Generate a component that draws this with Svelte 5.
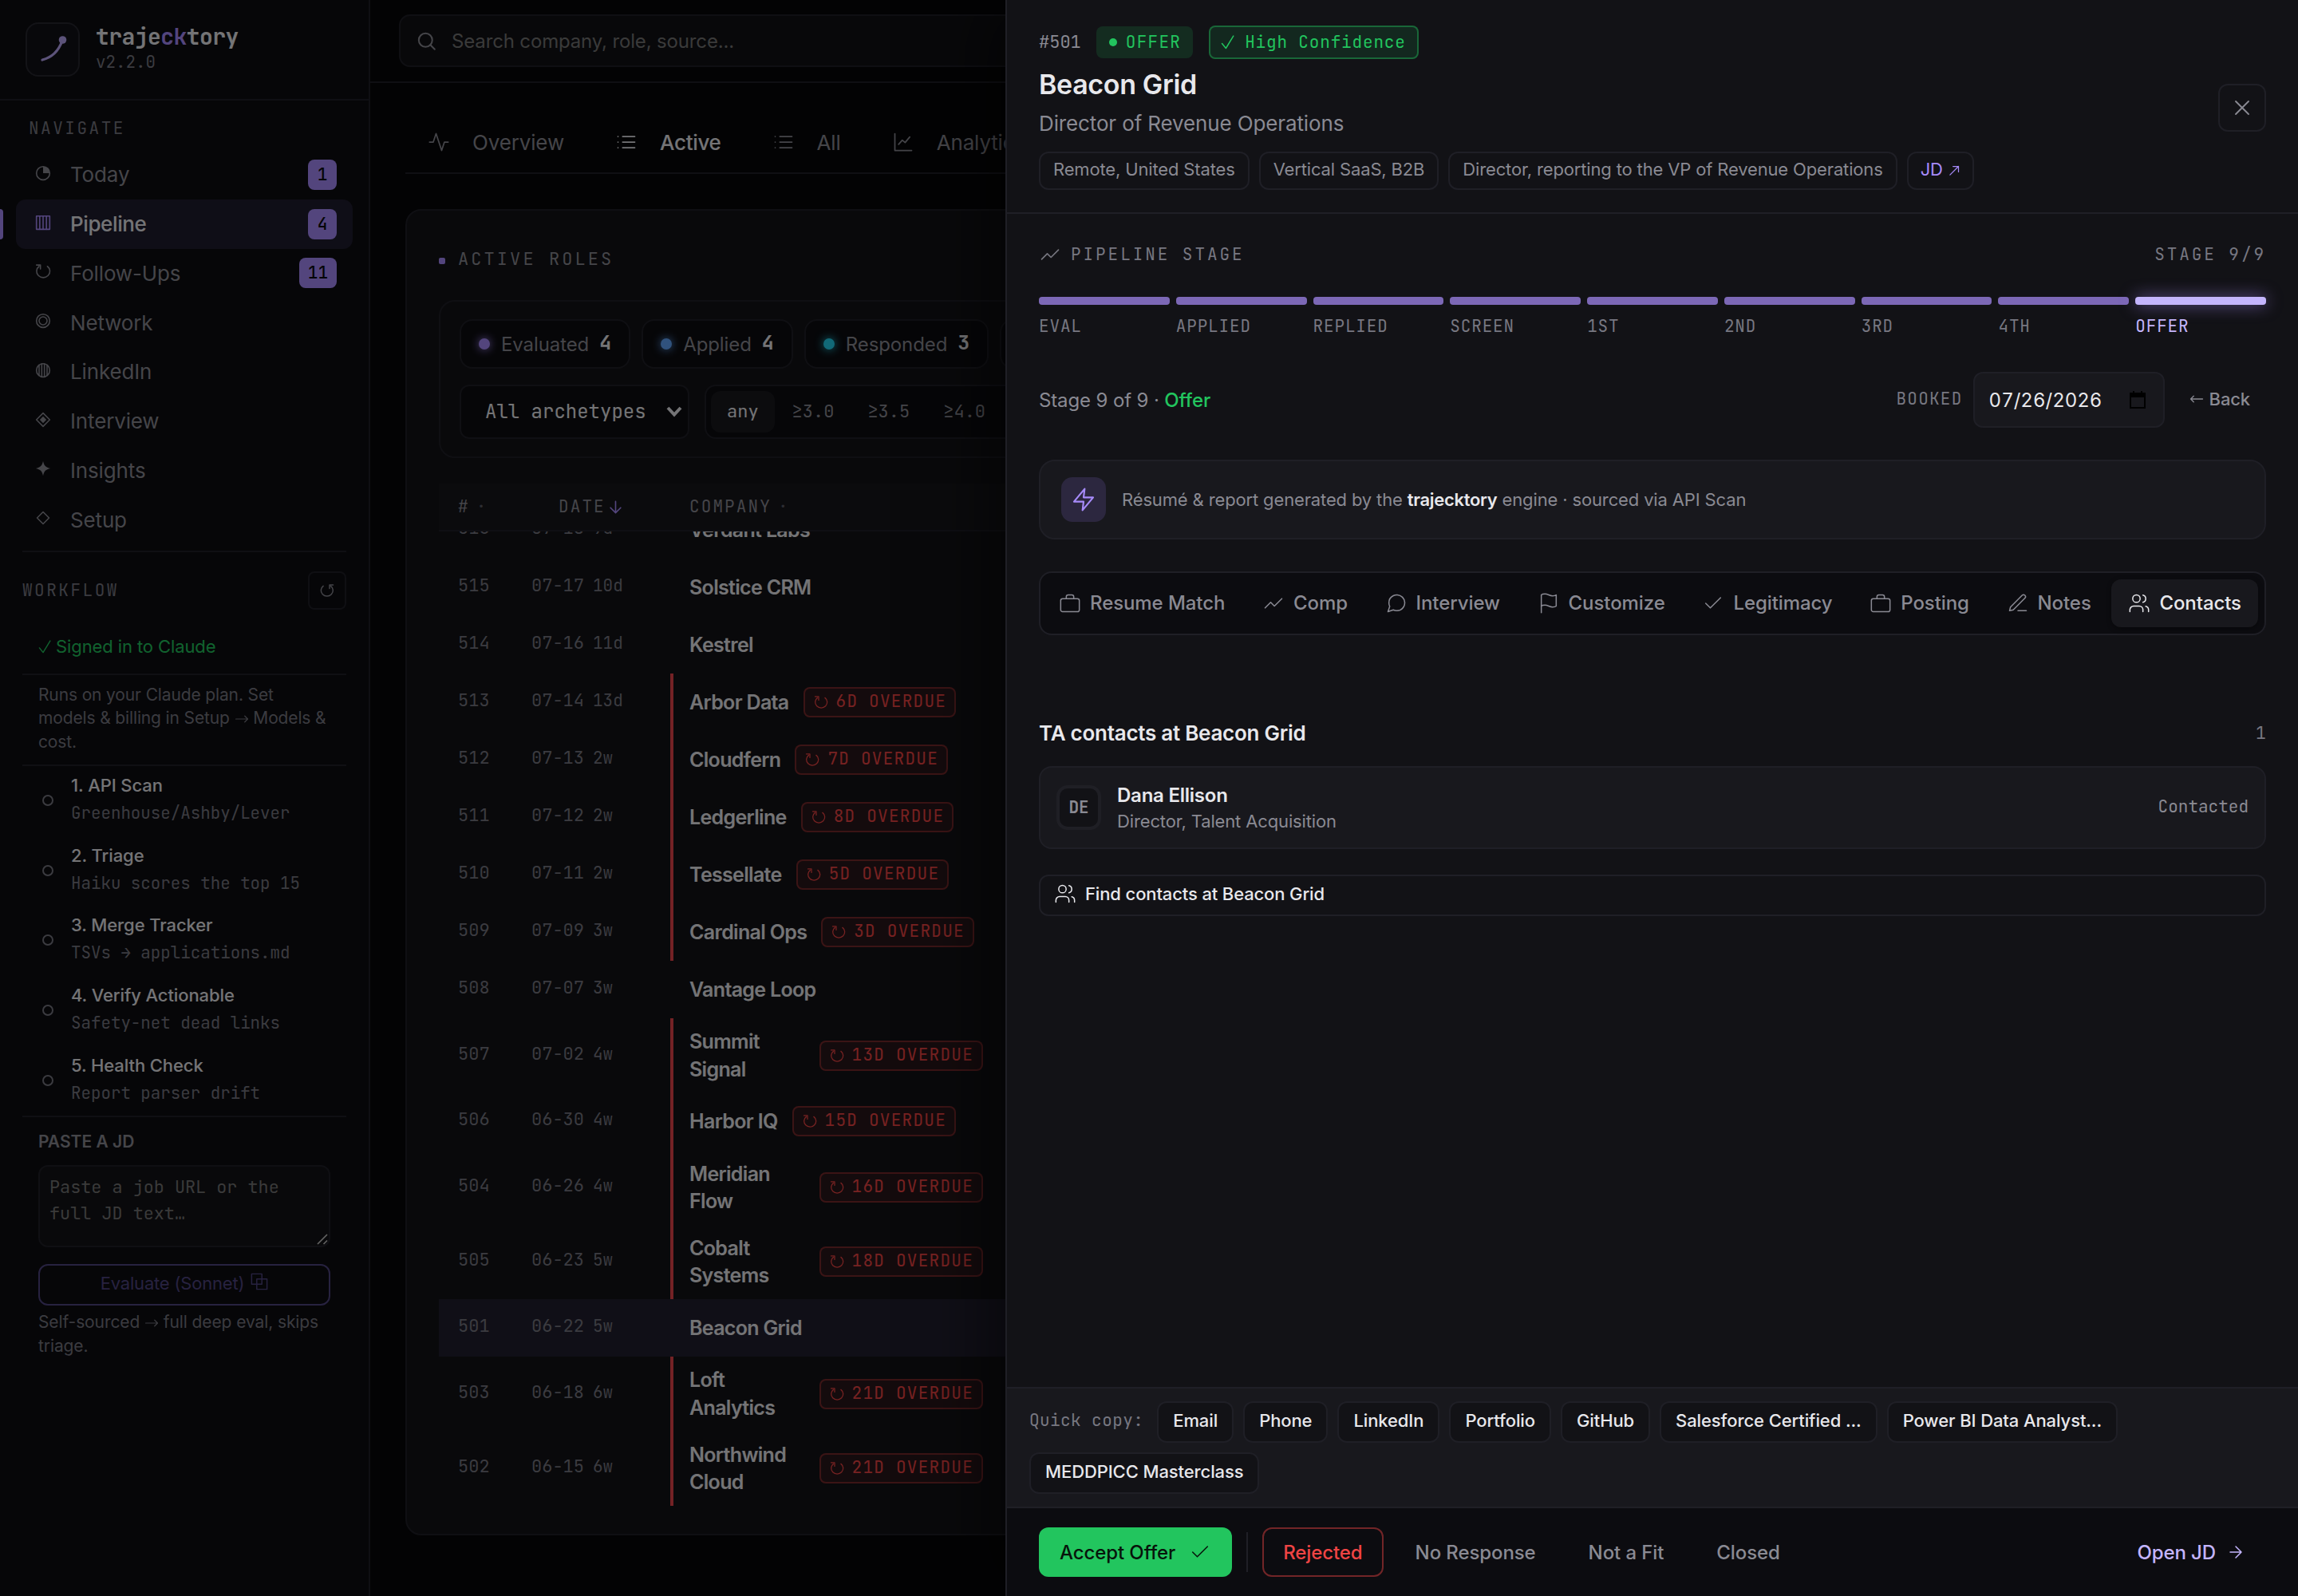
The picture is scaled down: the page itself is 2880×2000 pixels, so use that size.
<script>
  let search = '';
  let draft = '';
  let activeTab = 'Contacts';
  let minScore = 'any';

  // stroke icons, 24px grid
  const icons = {
    search: ['M11 4a7 7 0 1 0 0 14 7 7 0 0 0 0-14z', 'M20.5 20.5L16 16'],
    activity: ['M22 12h-4l-3 9L9 3l-3 9H2'],
    list: ['M8 6h13M8 12h13M8 18h13', 'M3 6h.01M3 12h.01M3 18h.01'],
    chart: ['M3 3v18h18', 'M7 14.5l4-4.5 3 2.5 5-6'],
    trend: ['M3 17l6-6 4 4 8-8'],
    briefcase: ['M4 7h16a2 2 0 0 1 2 2v10a2 2 0 0 1-2 2H4a2 2 0 0 1-2-2V9a2 2 0 0 1 2-2z', 'M8 7V5a2 2 0 0 1 2-2h4a2 2 0 0 1 2 2v2'],
    chat: ['M21 11.5a8.38 8.38 0 0 1-.9 3.8 8.5 8.5 0 0 1-7.6 4.7 8.38 8.38 0 0 1-3.8-.9L3 21l1.9-5.7a8.38 8.38 0 0 1-.9-3.8 8.5 8.5 0 0 1 4.7-7.6 8.38 8.38 0 0 1 3.8-.9h.5a8.48 8.48 0 0 1 8 8v.5z'],
    flag: ['M4 15s1-1 4-1 5 2 8 2 4-1 4-1V3s-1 1-4 1-5-2-8-2-4 1-4 1z', 'M4 22v-7'],
    check: ['M20 6L9 17l-5-5'],
    edit: ['M12 20h9', 'M16.5 3.5a2.12 2.12 0 0 1 3 3L7 19l-4 1 1-4z'],
    users: ['M16 21v-2a4 4 0 0 0-4-4H6a4 4 0 0 0-4 4v2', 'M9 3a4 4 0 1 0 0 8 4 4 0 0 0 0-8z', 'M22 21v-2a4 4 0 0 0-3-3.87', 'M16 3.13a4 4 0 0 1 0 7.75'],
    bolt: ['M13 2L3 14h9l-1 8 10-12h-9z'],
    close: ['M18 6L6 18M6 6l12 12'],
    arrow: ['M5 12h14M12 5l7 7-7 7'],
    down: ['M12 2v20M3 13l9 9 9-9'],
    today: ['M12 2a10 10 0 1 0 0 20 10 10 0 0 0 0-20z'],
    pipeline: ['M2 2h20v20H2z', 'M7 2v20M12 2v20M17 2v20'],
    refresh: ['M18.5 4.5a10 9.5 0 1 1-12.5 0', 'M2 2.5h6v6'],
    undo: ['M5.5 4.5a10 9.5 0 1 0 12.5 0', 'M22 2.5h-6v6'],
    network: ['M12 2a10 10 0 1 0 0 20 10 10 0 0 0 0-20z', 'M12 6a6 6 0 1 0 0 12 6 6 0 0 0 0-12z'],
    linkedin: ['M12 2a10 10 0 1 0 0 20 10 10 0 0 0 0-20z', 'M6 4v16M10 2v20M14 2v20M18 4v16'],
    interview: ['M12 2l10 10-10 10L2 12z'],
    insights: [],
    setup: ['M12 3l9 9-9 9-9-9z'],
    overlap: ['M1.5 1.5h14v14h-14z', 'M8.5 8.5h14v14h-14z'],
    tick: ['M2 14l6.500 8L21 1.500'],
    right: ['M2 12h20M17 7l5 5-5 5'],
    left: ['M22 12H2M7 7l-5 5 5 5'],
    upRight: ['M3 21L20 4M9 4h11v11']
  };

  const filled = {
    today: 'M12 2v10h10A10 10 0 0 0 12 2z',
    interview: 'M12 7l5 5-5 5-5-5z',
    insights: 'M12 1c1.5 7 4 9.5 11 11-7 1.500-9.500 4-11 11-1.500-7-4-9.500-11-11 7-1.500 9.500-4 11-11z'
  };

  const nav = [
    { label: 'Today', icon: 'today', count: 1 },
    { label: 'Pipeline', icon: 'pipeline', count: 4, active: true },
    { label: 'Follow-Ups', icon: 'refresh', count: 11 },
    { label: 'Network', icon: 'network' },
    { label: 'LinkedIn', icon: 'linkedin' },
    { label: 'Interview', icon: 'interview' },
    { label: 'Insights', icon: 'insights' },
    { label: 'Setup', icon: 'setup' }
  ];

  const steps = [
    ['1. API Scan', 'Greenhouse/Ashby/Lever'],
    ['2. Triage', 'Haiku scores the top 15'],
    ['3. Merge Tracker', 'TSVs → applications.md'],
    ['4. Verify Actionable', 'Safety-net dead links'],
    ['5. Health Check', 'Report parser drift']
  ];

  const views = [
    ['Overview', 'activity'],
    ['Active', 'list'],
    ['All', 'list'],
    ['Analytics', 'chart']
  ];

  const statuses = [
    ['Evaluated', 4, 'violet'],
    ['Applied', 4, 'blue'],
    ['Responded', 3, 'cyan'],
    ['Interview', 2, 'violet']
  ];

  const scores = ['any', '≥3.0', '≥3.5', '≥4.0', '≥4.5'];

  const roles = [
    { id: 516, date: '07-18', age: '9d', company: 'Verdant Labs' },
    { id: 515, date: '07-17', age: '10d', company: 'Solstice CRM' },
    { id: 514, date: '07-16', age: '11d', company: 'Kestrel' },
    { id: 513, date: '07-14', age: '13d', company: 'Arbor Data', overdue: 6 },
    { id: 512, date: '07-13', age: '2w', company: 'Cloudfern', overdue: 7 },
    { id: 511, date: '07-12', age: '2w', company: 'Ledgerline', overdue: 8 },
    { id: 510, date: '07-11', age: '2w', company: 'Tessellate', overdue: 5 },
    { id: 509, date: '07-09', age: '3w', company: 'Cardinal Ops', overdue: 3 },
    { id: 508, date: '07-07', age: '3w', company: 'Vantage Loop' },
    { id: 507, date: '07-02', age: '4w', company: 'Summit Signal', overdue: 13 },
    { id: 506, date: '06-30', age: '4w', company: 'Harbor IQ', overdue: 15 },
    { id: 504, date: '06-26', age: '4w', company: 'Meridian Flow', overdue: 16 },
    { id: 505, date: '06-23', age: '5w', company: 'Cobalt Systems', overdue: 18 },
    { id: 501, date: '06-22', age: '5w', company: 'Beacon Grid', selected: true },
    { id: 503, date: '06-18', age: '6w', company: 'Loft Analytics', overdue: 21 },
    { id: 502, date: '06-15', age: '6w', company: 'Northwind Cloud', overdue: 21 }
  ];

  const stages = ['EVAL', 'APPLIED', 'REPLIED', 'SCREEN', '1ST', '2ND', '3RD', '4TH', 'OFFER'];
  const current = stages.length - 1;

  const tabs = [
    ['Resume Match', 'briefcase'],
    ['Comp', 'trend'],
    ['Interview', 'chat'],
    ['Customize', 'flag'],
    ['Legitimacy', 'check'],
    ['Posting', 'briefcase'],
    ['Notes', 'edit'],
    ['Contacts', 'users']
  ];

  const snippets = ['Email', 'Phone', 'LinkedIn', 'Portfolio', 'GitHub', 'Salesforce Certified ...', 'Power BI Data Analyst...', 'MEDDPICC Masterclass'];
</script>

{#snippet icon(name, size, stroke = 1.5)}
  <svg class="icon" width={size} height={size} viewBox="0 0 24 24" fill="none" stroke="currentColor" stroke-width={stroke} stroke-linecap="round" stroke-linejoin="round">
    {#each icons[name] as d}
      <path {d} />
    {/each}
    {#if filled[name]}
      <path d={filled[name]} fill="currentColor" stroke="none" />
    {/if}
  </svg>
{/snippet}

<div class="app">
  <aside class="sidebar">
    <div class="brand">
      <div class="logo">
        <svg width="64" height="64" viewBox="0 0 64 64" fill="none">
          <path d="M19 45C31 42 39 35 44 21" stroke="#b9a6f5" stroke-width="3.200" stroke-linecap="round" />
          <circle cx="44.500" cy="20" r="4.800" fill="#b9a6f5" />
        </svg>
      </div>
      <div>
        <div class="brand-name">traje<span>ck</span>tory</div>
        <div class="version">v2.2.0</div>
      </div>
    </div>

    <div class="label nav-label">NAVIGATE</div>
    <nav>
      {#each nav as item}
        <a class="nav-item" class:active={item.active} href="#top">
          <span class="nav-icon">{@render icon(item.icon, 20, 1.9)}</span>
          <span class="nav-text">{item.label}</span>
          {#if item.count}
            <span class="count">{item.count}</span>
          {/if}
        </a>
      {/each}
    </nav>

    <section class="workflow">
      <div class="workflow-head">
        <span class="label">WORKFLOW</span>
        <button class="reload" aria-label="Reload">{@render icon('undo', 18, 2)}</button>
      </div>
      <div class="signed">{@render icon('tick', 17, 2)}Signed in to Claude</div>
      <p class="plan">Runs on your Claude plan. Set models &amp; billing in Setup <span class="inline">{@render icon('right', 18, 1.6)}</span> Models &amp; cost.</p>
      <div class="steps">
        {#each steps as [title, sub]}
          <div class="step">
            <span class="ring"></span>
            <div>
              <div class="step-title">{title}</div>
              <div class="step-sub">{sub}</div>
            </div>
          </div>
        {/each}
      </div>
      <div class="paste">
        <div class="paste-label">PASTE A JD</div>
        <div class="paste-box">
          <textarea bind:value={draft} placeholder="Paste a job URL or the full JD text…"></textarea>
          <svg class="grip" width="16" height="16" viewBox="0 0 16 16" stroke="#c8c8c8" stroke-width="1.600">
            <path d="M2 14L14 2M9.500 14L14 9.500" />
          </svg>
        </div>
        <button class="evaluate">Evaluate (Sonnet) {@render icon('overlap', 22, 1.6)}</button>
        <p class="hint">Self-sourced <span class="inline">{@render icon('right', 18, 1.6)}</span> full deep eval, skips triage.</p>
      </div>
    </section>
  </aside>

  <main>
    <header class="topbar">
      <label class="search">
        {@render icon('search', 29, 1.7)}
        <input bind:value={search} placeholder="Search company, role, source..." />
      </label>
    </header>

    <div class="views">
      {#each views as [name, glyph]}
        <button class="view" class:active={name === 'Active'}>
          {@render icon(glyph, 28)}
          <span>{name}</span>
        </button>
      {/each}
    </div>

    <section class="board">
      <h2 class="board-title"><i></i>ACTIVE ROLES</h2>

      <div class="filters">
        <div class="filter-row">
          {#each statuses as [name, n, tone]}
            <button class="status"><i class={tone}></i>{name}<b>{n}</b></button>
          {/each}
        </div>
        <div class="filter-row second">
          <button class="select">
            All archetypes
            <svg width="20" height="14" viewBox="0 0 20 14" fill="none" stroke="currentColor" stroke-width="4">
              <path d="M2 2l8 8.500L18 2" />
            </svg>
          </button>
          <div class="segments">
            {#each scores as score}
              <button class:on={minScore === score} on:click={() => (minScore = score)}>{score}</button>
            {/each}
          </div>
        </div>
      </div>

      <div class="table-head">
        <span class="c-id">#<em>·</em></span>
        <span class="c-date">DATE{@render icon('down', 17, 2.3)}</span>
        <span class="c-company">COMPANY<em>·</em></span>
      </div>
      <div class="rows">
        {#each roles as role}
          <div class="row" class:selected={role.selected}>
            <span class="c-id">{role.id}</span>
            <span class="c-date">{role.date}<small>{role.age}</small></span>
            <span class="c-company" class:late={role.overdue}>
              <strong>{role.company}</strong>
              {#if role.overdue}
                <span class="overdue">{@render icon('refresh', 18, 1.7)}<span>{role.overdue}D OVERDUE</span></span>
              {/if}
            </span>
          </div>
        {/each}
      </div>
    </section>
  </main>

  <div class="scrim"></div>

  <div class="drawer">
    <header class="drawer-head">
      <div>
        <div class="meta">
          <span class="id">#501</span>
          <span class="offer"><i></i>OFFER</span>
          <span class="confidence">{@render icon('tick', 18, 2)}High Confidence</span>
        </div>
        <h1>Beacon Grid</h1>
        <div class="role">Director of Revenue Operations</div>
        <div class="tags">
          <span>Remote, United States</span>
          <span>Vertical SaaS, B2B</span>
          <span>Director, reporting to the VP of Revenue Operations</span>
          <span class="link">JD {@render icon('upRight', 15, 2)}</span>
        </div>
      </div>
      <button class="close" aria-label="Close">{@render icon('close', 32, 1.4)}</button>
    </header>

    <div class="drawer-body">
      <div class="stage-head">
        {@render icon('trend', 28, 1.4)}
        <span>PIPELINE STAGE</span>
        <span class="stage-count">STAGE 9/9</span>
      </div>
      <div class="track">
        {#each stages as stage, i}
          <div class="stop" class:current={i === current}>
            <div class="bar"></div>
            <span>{stage}</span>
          </div>
        {/each}
      </div>

      <div class="stage-row">
        <span class="stage-text">Stage 9 of 9 · <b>Offer</b></span>
        <span class="booked">BOOKED</span>
        <span class="date">
          07/26/2026
          <svg width="20" height="22" viewBox="0 0 20 22">
            <path d="M1 3h18v18H1z" fill="none" stroke="#000" stroke-width="2" />
            <path d="M1 3h18v5H1zM4 0h2v3H4zM14 0h2v3h-2z" fill="#000" />
          </svg>
        </span>
        <button class="back">{@render icon('left', 18, 1.7)}Back</button>
      </div>

      <div class="engine">
        <span class="engine-icon">{@render icon('bolt', 32, 1.6)}</span>
        <p>Résumé &amp; report generated by the <b>trajecktory</b> engine · sourced via API Scan</p>
      </div>

      <div class="tabs">
        {#each tabs as [name, glyph]}
          <button class="tab" class:on={activeTab === name} on:click={() => (activeTab = name)}>
            {@render icon(glyph, 28, 1.3)}
            <span>{name}</span>
          </button>
        {/each}
      </div>

      <div class="contacts-head">
        <h3>TA contacts at Beacon Grid</h3>
        <span>1</span>
      </div>
      <div class="contact">
        <span class="avatar">DE</span>
        <div>
          <div class="contact-name">Dana Ellison</div>
          <div class="contact-role">Director, Talent Acquisition</div>
        </div>
        <span class="contact-state">Contacted</span>
      </div>
      <button class="find">{@render icon('users', 28, 1.3)}Find contacts at Beacon Grid</button>
    </div>

    <div class="quick">
      <span class="quick-label">Quick copy:</span>
      {#each snippets as text}
        <button>{text}</button>
      {/each}
    </div>

    <footer class="actions">
      <button class="accept">Accept Offer {@render icon('check', 28, 1.3)}</button>
      <i class="rule"></i>
      <button class="rejected">Rejected</button>
      <button>No Response</button>
      <button>Not a Fit</button>
      <button>Closed</button>
      <button class="open">Open JD {@render icon('arrow', 24, 1.5)}</button>
    </footer>
  </div>
</div>

<style>
  :global(body) {
    background: #060608;
  }

  .app {
    --sans: 'Inter', sans-serif;
    --mono: 'JetBrains Mono', 'DejaVu Sans Mono', monospace;
    --sunken: #0c0c10;
    --panel: #121216;
    --raised: #18181d;
    --line: #1f1f26;
    --text: #e8e8ec;
    --muted: #8a8a93;
    --faint: #777781;
    --violet: #a78bfa;
    --lilac: #c4b5fd;
    --green: #22c55e;
    --red: #ef4444;
    position: relative;
    display: flex;
    width: 2880px;
    height: 2000px;
    overflow: hidden;
    background: #060608;
    color: var(--text);
    font-family: var(--sans);
  }

  .app *,
  .app {
    box-sizing: border-box;
  }

  button,
  input,
  textarea {
    font: inherit;
    color: inherit;
    background: none;
    border: none;
    padding: 0;
    margin: 0;
    outline: none;
    letter-spacing: inherit;
  }

  h1,
  h2,
  h3,
  p {
    margin: 0;
    font-weight: 400;
  }

  .icon {
    display: block;
    flex: none;
  }

  .inline {
    display: inline-block;
    vertical-align: -3px;
  }

  /* Sidebar */
  .sidebar {
    width: 464px;
    flex: none;
    background: var(--sunken);
    border-right: 2px solid var(--line);
  }

  .brand {
    display: flex;
    gap: 20px;
    height: 126px;
    padding: 28px 32px 0;
    border-bottom: 2px solid var(--line);
  }

  .logo {
    width: 68px;
    height: 68px;
    border: 2px solid #26262e;
    border-radius: 16px;
    background: #101016;
  }

  .brand-name {
    font: 700 28px/36px var(--mono);
    letter-spacing: -0.02em;
  }

  .brand-name span {
    color: var(--violet);
  }

  .version {
    margin-top: 1px;
    font: 20.8px/26px var(--mono);
    color: var(--faint);
  }

  .label {
    font: 21px/24px var(--mono);
    letter-spacing: 0.12em;
    color: var(--faint);
  }

  .nav-label {
    padding: 23px 36px 15px;
  }

  nav {
    padding: 0 20px;
  }

  .nav-item {
    position: relative;
    display: flex;
    align-items: center;
    height: 61.75px;
    padding: 0 20px 0 24px;
    border-radius: 12px;
    color: var(--muted);
    font-size: 26px;
    letter-spacing: -0.15px;
    text-decoration: none;
  }

  .nav-item.active {
    background: #1f1c2e;
    color: var(--text);
    font-weight: 500;
    letter-spacing: -0.4px;
  }

  .nav-item.active::before {
    content: '';
    position: absolute;
    left: -20px;
    top: 12px;
    width: 4px;
    height: 38px;
    border-radius: 0 4px 4px 0;
    background: var(--violet);
  }

  .nav-icon {
    width: 44px;
    margin-top: -4px;
  }

  .nav-item.active .nav-icon {
    color: var(--violet);
  }

  .nav-text {
    flex: 1;
  }

  .count {
    min-width: 36px;
    padding: 0 11px;
    border-radius: 8px;
    background: var(--violet);
    color: #0a0a0f;
    font: 500 21px/38px var(--mono);
    letter-spacing: 0;
    text-align: center;
  }

  .workflow {
    margin: 8px 28px 0;
    border-top: 2px solid var(--line);
  }

  .workflow-head {
    display: flex;
    align-items: center;
    justify-content: space-between;
    padding-top: 24px;
  }

  .reload {
    display: grid;
    place-items: center;
    width: 48px;
    height: 48px;
    border: 2px solid var(--line);
    border-radius: 8px;
    color: var(--muted);
  }

  .signed {
    display: flex;
    align-items: center;
    gap: 5px;
    padding: 31px 20px 19px;
    border-bottom: 2px solid var(--line);
    color: var(--green);
    font-size: 22px;
    line-height: 30px;
    letter-spacing: -0.1px;
  }

  .plan {
    padding: 10px 16px 13.8px 20px;
    border-bottom: 2px solid var(--line);
    color: var(--faint);
    font-size: 21px;
    line-height: 29.4px;
    letter-spacing: -0.14px;
  }

  .steps {
    border-bottom: 2px solid var(--line);
  }

  .step {
    display: flex;
    gap: 22px;
    height: 87.7px;
    padding: 8px 0 0 25px;
  }

  .ring {
    width: 14px;
    height: 14px;
    margin-top: 28px;
    border: 2.4px solid var(--faint);
    border-radius: 50%;
  }

  .step-title {
    font-size: 22px;
    font-weight: 500;
    line-height: 32px;
    letter-spacing: -0.1px;
  }

  .step-sub {
    margin-top: 3px;
    font: 20.8px/32px var(--mono);
    color: var(--faint);
  }

  .paste {
    padding: 18px 20px 0;
  }

  .paste-label {
    color: var(--muted);
    font-size: 21px;
    font-weight: 600;
    line-height: 26px;
  }

  .paste-box {
    position: relative;
    margin-top: 16px;
    height: 103px;
  }

  textarea {
    display: block;
    width: 100%;
    height: 100%;
    padding: 9px 12px;
    border: 2px solid var(--line);
    border-radius: 12px;
    background: #121216;
    font: 21.8px/33px var(--mono);
    resize: none;
    overflow: hidden;
  }

  textarea::placeholder {
    color: #757575;
  }

  .grip {
    position: absolute;
    right: 2px;
    bottom: 2px;
  }

  .evaluate {
    display: flex;
    align-items: center;
    justify-content: center;
    gap: 8px;
    width: 100%;
    height: 52px;
    margin-top: 21px;
    padding-bottom: 4px;
    border: 2px solid #4f4480;
    border-radius: 12px;
    color: #4f4480;
    font-size: 22px;
    letter-spacing: -0.2px;
  }

  .evaluate .icon {
    margin-top: -4px;
  }

  .hint {
    margin-top: 6px;
    color: var(--faint);
    font-size: 21px;
    line-height: 30px;
    letter-spacing: -0.1px;
  }

  /* Main */
  main {
    flex: 1;
    min-width: 0;
  }

  .topbar {
    height: 104px;
    padding: 18px 36px 0;
    border-bottom: 2px solid var(--line);
  }

  .search {
    display: flex;
    align-items: center;
    gap: 17px;
    height: 66px;
    padding: 0 18px;
    border: 2px solid var(--line);
    border-radius: 14px;
    background: #101014;
    color: var(--muted);
    font-size: 24px;
    letter-spacing: -0.15px;
  }

  .search input {
    flex: 1;
  }

  .search input::placeholder {
    color: #757575;
  }

  .views {
    display: flex;
    gap: 8px;
    height: 114px;
    margin: 0 44px;
    padding-top: 36px;
    border-bottom: 2px solid var(--line);
  }

  .view {
    display: flex;
    align-items: center;
    gap: 28px;
    height: 76px;
    padding: 0 28px;
    color: var(--muted);
    font-size: 26px;
    letter-spacing: -0.15px;
  }

  .view.active {
    color: var(--text);
    font-weight: 500;
    letter-spacing: -0.3px;
  }

  .board {
    margin: 44px 44px 0;
    height: 1662px;
    padding: 49px 40px 0;
    border: 2px solid var(--line);
    border-radius: 20px;
    background: var(--panel);
  }

  .board-title {
    display: flex;
    align-items: center;
    gap: 16px;
    font: 22px/24px var(--mono);
    letter-spacing: 0.14em;
    color: var(--muted);
  }

  .board-title i {
    width: 8px;
    height: 8px;
    margin-top: 4px;
    border-radius: 2px;
    background: var(--violet);
  }

  .filters {
    margin-top: 39px;
    padding: 22px 24px;
    border: 2px solid var(--line);
    border-radius: 20px;
  }

  .filter-row {
    display: flex;
    gap: 14px;
  }

  .filter-row.second {
    gap: 19px;
    margin-top: 20px;
  }

  .status {
    display: flex;
    align-items: center;
    height: 62px;
    padding: 0 22px;
    border: 2px solid var(--line);
    border-radius: 16px;
    background: var(--sunken);
    color: var(--muted);
    font-size: 24px;
    letter-spacing: -0.1px;
  }

  .status i {
    width: 14px;
    height: 14px;
    margin-right: 14px;
    border-radius: 50%;
    background: currentColor;
    box-shadow: 0 0 12px currentColor;
  }

  .status i.violet {
    color: var(--violet);
  }

  .status i.blue {
    color: #60a5fa;
  }

  .status i.cyan {
    color: #22d3ee;
  }

  .status b {
    margin: -4px 0 0 13px;
    color: var(--text);
    font: 700 25px/1 var(--mono);
    letter-spacing: 0;
  }

  .select {
    display: flex;
    align-items: center;
    justify-content: space-between;
    width: 288px;
    height: 68px;
    padding: 0 7px 0 30px;
    border: 2px solid var(--line);
    border-radius: 12px;
    background: var(--sunken);
    font: 24px/1 var(--mono);
  }

  .segments {
    display: flex;
    gap: 2px;
    padding: 6px;
    border: 2px solid var(--line);
    border-radius: 14px;
    background: var(--sunken);
  }

  .segments button {
    padding: 0 20px;
    border-radius: 12px;
    color: var(--muted);
    font: 22px/48px var(--mono);
  }

  .segments button.on {
    background: var(--raised);
    color: var(--text);
  }

  .table-head,
  .row {
    display: grid;
    grid-template-columns: 116px 174px 416px 1fr;
    align-items: center;
  }

  .table-head {
    height: 60px;
    margin-top: 32px;
    border-bottom: 2px solid var(--line);
    background: #16161b;
    color: var(--muted);
    font: 21px/24px var(--mono);
    letter-spacing: 0.1em;
  }

  .table-head span {
    display: flex;
    align-items: center;
    gap: 8px;
  }

  .table-head em {
    font-style: normal;
    color: #5c5c66;
  }

  .c-id {
    padding-left: 24px;
  }

  .table-head .c-date {
    gap: 4px;
    padding-left: 34px;
  }

  .table-head .c-date .icon {
    color: var(--violet);
  }

  .rows {
    overflow: hidden;
  }

  .row {
    min-height: 72px;
    color: var(--faint);
    font: 22px/30px var(--mono);
  }

  .row:first-child {
    margin-top: -38px;
  }

  .row.selected {
    background: #211f2e;
  }

  .row .c-id,
  .row .c-date {
    margin-top: -4px;
  }

  .row small {
    margin-left: 11px;
    font-size: 21px;
  }

  .c-company {
    padding-left: 24px;
  }

  .row .c-company {
    display: flex;
    align-items: center;
    align-self: stretch;
    gap: 18px;
    padding: 12.2px 24px 12.2px 20px;
    border-left: 4px solid transparent;
  }

  .row .c-company.late {
    border-left-color: #e8454a;
  }

  .row strong {
    color: var(--text);
    font: 600 25px/34.5px var(--sans);
    letter-spacing: -0.027em;
  }

  .overdue {
    display: flex;
    flex: none;
    align-items: center;
    gap: 10px;
    height: 38px;
    padding: 0 11px 0 11px;
    border: 2px solid rgba(239, 68, 68, 0.4);
    border-radius: 8px;
    background: rgba(239, 68, 68, 0.1);
    color: var(--red);
    font-size: 21px;
    line-height: 32px;
    letter-spacing: 0.06em;
  }

  .overdue span {
    margin-right: -1px;
    margin-top: -2px;
  }

  .scrim {
    position: absolute;
    inset: 0;
    background: rgba(0, 0, 0, 0.5);
  }

  /* Drawer */
  .drawer {
    position: absolute;
    top: 0;
    right: 0;
    bottom: 0;
    display: flex;
    flex-direction: column;
    width: 1620px;
    border-left: 2px solid var(--line);
    background: var(--panel);
    box-shadow: -24px 0 80px rgba(0, 0, 0, 0.5);
  }

  .drawer-head {
    display: flex;
    align-items: center;
    justify-content: space-between;
    height: 268px;
    padding: 32px 40px 28px;
    border-bottom: 2px solid var(--line);
  }

  .meta {
    display: flex;
    align-items: center;
    height: 42px;
    font: 21px/40px var(--mono);
    color: var(--green);
  }

  .meta .id {
    margin-right: 19px;
    color: var(--muted);
    font-size: 22px;
  }

  .offer {
    display: flex;
    align-items: center;
    gap: 11px;
    height: 40px;
    padding: 0 15px 0 16px;
    border-radius: 8px;
    background: rgba(34, 197, 94, 0.15);
    letter-spacing: 0.06em;
  }

  .offer i {
    width: 10px;
    height: 10px;
    border-radius: 50%;
    background: var(--green);
  }

  .confidence {
    display: flex;
    align-items: center;
    gap: 12px;
    height: 42px;
    margin-left: 20px;
    padding: 0 14px 0 13px;
    border: 2px solid rgba(34, 197, 94, 0.4);
    border-radius: 8px;
    background: rgba(34, 197, 94, 0.13);
    letter-spacing: 0.04em;
    line-height: 38px;
  }

  h1 {
    margin-top: 11px;
    font-size: 34px;
    font-weight: 600;
    line-height: 42px;
    letter-spacing: -0.01em;
  }

  .role {
    margin-top: 10px;
    color: var(--muted);
    font-size: 26px;
    line-height: 36px;
    letter-spacing: -0.13px;
  }

  .tags {
    display: flex;
    gap: 12px;
    margin-top: 17px;
  }

  .tags span {
    height: 48px;
    padding: 0 16px;
    border: 2px solid var(--line);
    border-radius: 12px;
    color: var(--muted);
    font-size: 22px;
    line-height: 41px;
    letter-spacing: -0.15px;
  }

  .tags .link {
    display: flex;
    gap: 7px;
    padding: 0 15px;
    color: var(--violet);
  }

  .tags .link .icon {
    margin-top: 14px;
  }

  .close {
    display: grid;
    place-items: center;
    width: 60px;
    height: 60px;
    border: 2px solid var(--line);
    border-radius: 12px;
    color: var(--muted);
  }

  .drawer-body {
    flex: 1;
    padding: 39px 40px 0;
  }

  .stage-head {
    display: flex;
    align-items: center;
    height: 24px;
    gap: 12px;
    color: var(--faint);
    font: 21px/24px var(--mono);
    letter-spacing: 0.14em;
  }

  .stage-count {
    margin-left: auto;
  }

  .track {
    display: flex;
    gap: 8px;
    margin-top: 41px;
  }

  .stop {
    flex: 1;
    color: var(--faint);
    font: 21px/24px var(--mono);
    letter-spacing: 0.04em;
  }

  .bar {
    height: 10px;
    margin-bottom: 15px;
    border-radius: 4px;
    background: #7c68b6;
  }

  .stop.current {
    color: var(--lilac);
  }

  .stop.current .bar {
    background: var(--lilac);
    box-shadow: 0 0 20px rgba(167, 139, 250, 0.6);
  }

  .stop span {
    display: block;
  }

  .stage-row {
    display: flex;
    align-items: center;
    height: 70px;
    margin-top: 45px;
    color: var(--muted);
    font-size: 24px;
    letter-spacing: -0.13px;
  }

  .stage-text {
    flex: 1;
  }

  .stage-text b {
    color: var(--green);
    font-weight: 500;
  }

  .booked {
    margin: -2px 13px 0 0;
    color: var(--faint);
    font: 21px/24px var(--mono);
    letter-spacing: 0.06em;
  }

  .date {
    display: flex;
    align-items: center;
    justify-content: space-between;
    width: 240px;
    height: 70px;
    padding: 0 22px 0 18px;
    border: 2px solid var(--line);
    border-radius: 12px;
    background: var(--raised);
    color: var(--text);
    font-size: 24px;
    font-variant-numeric: tabular-nums;
    letter-spacing: 0;
  }

  .back {
    display: flex;
    align-items: center;
    gap: 7px;
    padding: 0 20px 0 31px;
    margin-top: -2px;
    font-size: 22px;
    font-weight: 500;
  }

  .engine {
    display: flex;
    align-items: center;
    gap: 20px;
    height: 100px;
    margin-top: 40px;
    padding: 0 26px;
    border: 2px solid var(--line);
    border-radius: 20px;
    background: var(--raised);
    color: var(--muted);
    font-size: 22px;
    letter-spacing: -0.14px;
  }

  .engine-icon {
    display: grid;
    place-items: center;
    width: 56px;
    height: 56px;
    border-radius: 14px;
    background: #2c273f;
    color: var(--violet);
  }

  .engine b {
    color: var(--text);
    font-weight: 600;
    letter-spacing: -0.3px;
  }

  .tabs {
    display: flex;
    justify-content: space-between;
    height: 80px;
    margin-top: 40px;
    padding: 8px 8px 8px 2px;
    border: 2px solid var(--line);
    border-radius: 16px;
    background: var(--sunken);
  }

  .tab {
    display: flex;
    align-items: center;
    gap: 11px;
    padding: 0 21px;
    border-radius: 12px;
    color: var(--muted);
    font-size: 24px;
    font-weight: 500;
    letter-spacing: -0.08px;
  }

  .tab span {
    margin-top: -1px;
  }

  .tab.on {
    background: var(--raised);
    color: var(--text);
    box-shadow: 0 2px 6px rgba(0, 0, 0, 0.4);
  }

  .contacts-head {
    display: flex;
    align-items: center;
    justify-content: space-between;
    margin-top: 107px;
    color: var(--faint);
    font: 22px/32px var(--mono);
  }

  h3 {
    color: var(--text);
    font: 600 26px/32px var(--sans);
    letter-spacing: -0.01em;
  }

  .contact {
    display: flex;
    align-items: center;
    gap: 20px;
    height: 104px;
    margin-top: 25px;
    padding: 0 20px;
    border: 2px solid var(--line);
    border-radius: 16px;
    background: var(--raised);
  }

  .avatar {
    display: grid;
    place-items: center;
    width: 56px;
    height: 56px;
    border: 4px solid #1f1f25;
    border-radius: 14px;
    background: var(--panel);
    color: var(--muted);
    font: 700 21px/44px var(--mono);
  }

  .contact-name {
    font-size: 24px;
    font-weight: 600;
    line-height: 34px;
    letter-spacing: -0.01em;
  }

  .contact-role {
    margin-top: -1px;
    color: var(--muted);
    font-size: 22px;
    line-height: 32px;
    letter-spacing: -0.14px;
  }

  .contact-state {
    margin: -2px 0 0 auto;
    color: var(--muted);
    font: 21px/24px var(--mono);
  }

  .find {
    display: flex;
    align-items: center;
    gap: 11px;
    width: 100%;
    height: 52px;
    margin-top: 32px;
    padding: 0 17px 4px;
    border: 2px solid var(--line);
    border-radius: 12px;
    font-size: 22px;
    font-weight: 500;
    letter-spacing: -0.13px;
  }

  .quick {
    display: flex;
    flex-wrap: wrap;
    align-items: center;
    gap: 12px;
    height: 150px;
    padding: 16px 200px 16px 28px;
    border-top: 2px solid var(--line);
    background: var(--raised);
  }

  .quick-label {
    margin: -5px 5px 0 0;
    color: var(--faint);
    font: 21px/24px var(--mono);
    letter-spacing: 0.02em;
  }

  .quick button {
    height: 52px;
    padding: 0 18px 4px;
    border: 2px solid var(--line);
    border-radius: 12px;
    background: var(--panel);
    font-size: 22px;
    font-weight: 500;
    letter-spacing: -0.1px;
  }

  .actions {
    display: flex;
    align-items: center;
    gap: 14px;
    height: 112px;
    padding: 0 40px;
    border-top: 2px solid var(--line);
    background: var(--sunken);
  }

  .actions button {
    display: flex;
    align-items: center;
    gap: 17px;
    height: 62px;
    padding: 0 26px;
    border-radius: 12px;
    color: var(--muted);
    font-size: 24px;
    font-weight: 500;
    letter-spacing: -0.1px;
  }

  .actions .accept {
    background: var(--green);
    color: #07140b;
  }

  .rule {
    width: 2px;
    height: 50px;
    margin: 0 4px;
    background: var(--line);
  }

  .actions .rejected {
    padding: 0 24px;
    border: 2px solid rgba(239, 68, 68, 0.45);
    color: var(--red);
  }

  .actions .open {
    gap: 13px;
    margin-left: auto;
    color: var(--lilac);
  }
</style>
